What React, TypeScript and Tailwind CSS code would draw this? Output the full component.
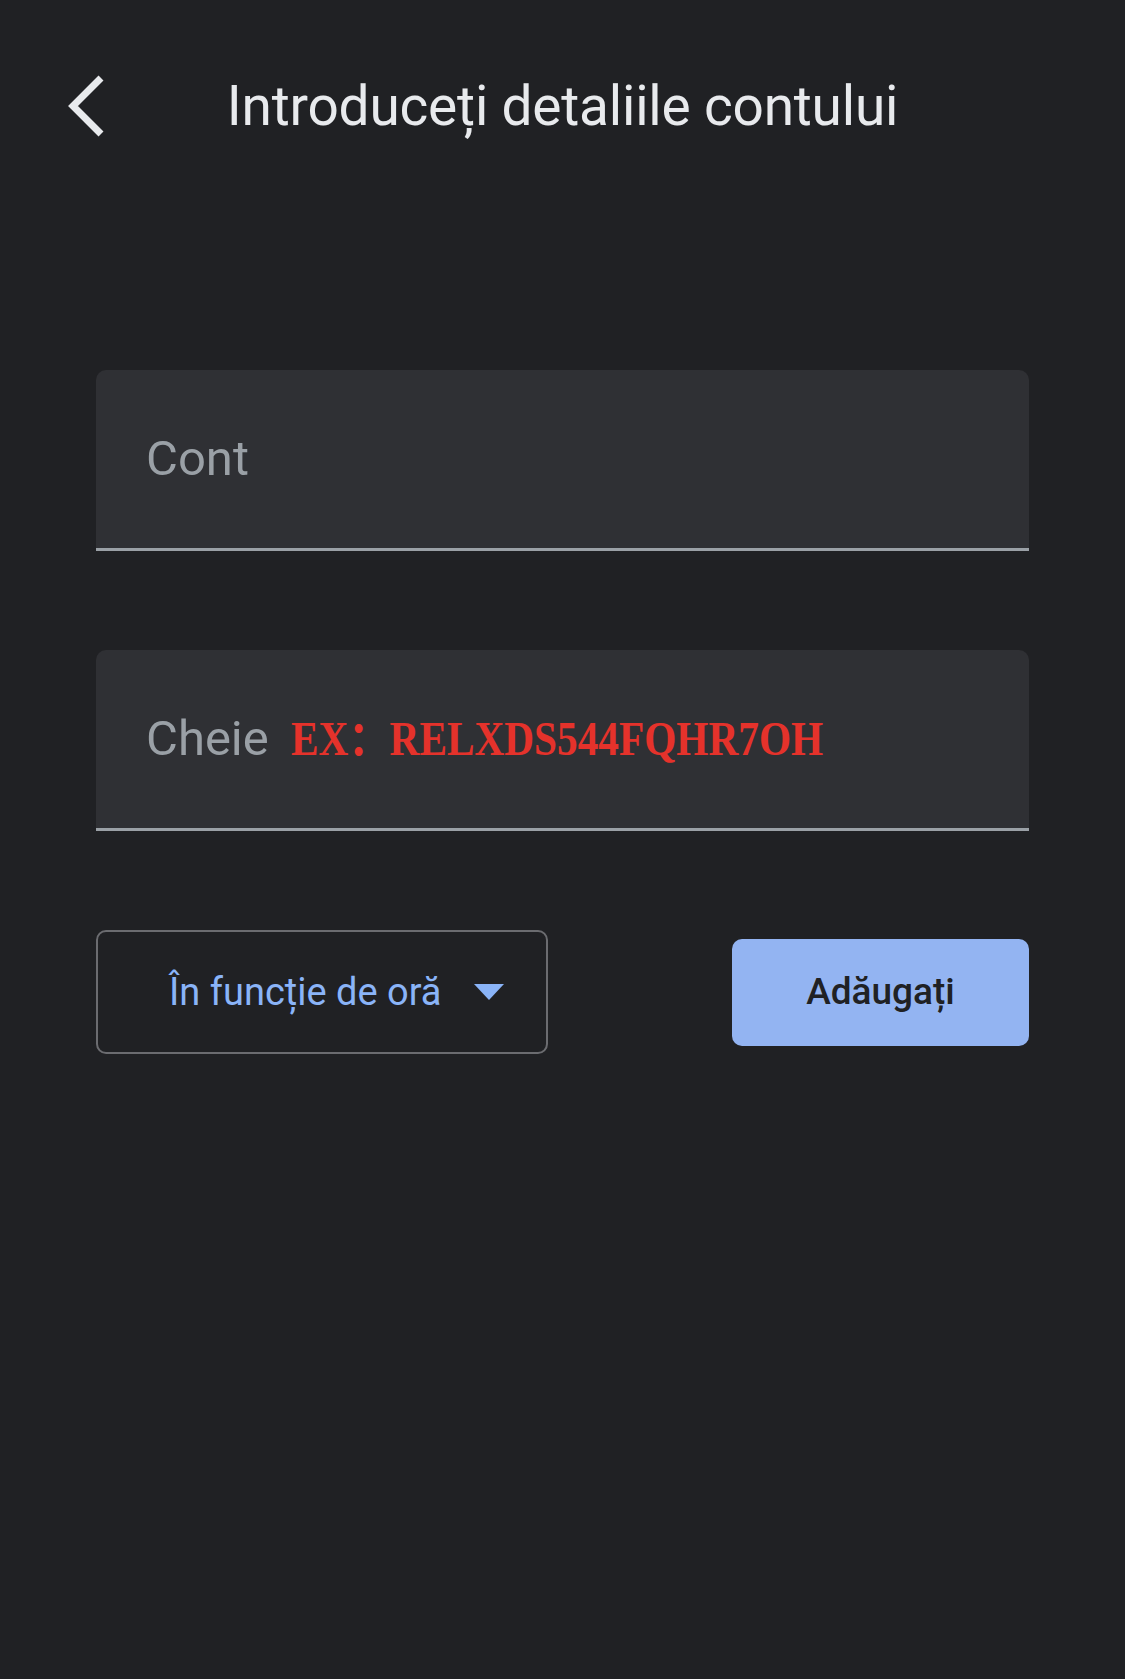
import React from "react";

function BackChevron() {
  return (
    <svg width="42" height="62" viewBox="0 0 42 62" className="shrink-0">
      <polyline
        points="37,3 9,31 37,59"
        fill="none"
        stroke="#e8eaed"
        strokeWidth="7"
        strokeLinecap="butt"
        strokeLinejoin="miter"
      />
    </svg>
  );
}

function TextField({ children }: { children: React.ReactNode }) {
  return (
    <div className="flex h-[181px] items-center rounded-t-[10px] border-b-[3px] border-[#9aa0a6] bg-[#2f3034] pl-[50px]">
      {children}
    </div>
  );
}

export default function App() {
  return (
    <div
      className="flex h-[1679px] w-[1125px] flex-col bg-[#202124]"
      style={{ fontFamily: "Roboto, 'Noto Sans', Arial, sans-serif" }}
    >
      {/* Header */}
      <header className="flex items-center px-[64px] pt-[75px]">
        <BackChevron />
        <h1 className="flex-1 text-center text-[55px] leading-[62px] font-normal tracking-[-0.2px] text-[#e8eaed]">
          Introduceți detaliile contului
        </h1>
        <div className="w-[42px]" />
      </header>

      {/* Form */}
      <div className="mt-[233px] flex flex-col px-[96px]">
        <TextField>
          <span className="text-[49px] text-[#9aa0a6]">Cont</span>
        </TextField>

        <div className="mt-[99px]">
          <TextField>
            <span className="text-[49px] text-[#9aa0a6]">Cheie</span>
            <span
              className="ml-[22px] origin-left scale-x-[0.86] text-[48px] font-bold whitespace-nowrap text-[#e5322b]"
              style={{ fontFamily: "'Liberation Serif', 'Noto Sans CJK SC', serif" }}
            >
              EX：RELXDS544FQHR7OH
            </span>
          </TextField>
        </div>

        <div className="mt-[99px] flex items-center justify-between">
          <button className="flex h-[124px] w-[452px] items-center rounded-[10px] border-2 border-[#6b6c70] pl-[71px]">
            <span className="text-[38px] font-normal text-[#8ab4f8]">În funcție de oră</span>
            <svg width="30" height="16" viewBox="0 0 30 16" className="ml-[32px]">
              <polygon points="0,0 30,0 15,16" fill="#8ab4f8" />
            </svg>
          </button>
          <button className="flex h-[107px] w-[297px] items-center justify-center rounded-[10px] bg-[#93b4f2]">
            <span className="text-[37px] font-medium text-[#202124]">Adăugați</span>
          </button>
        </div>
      </div>
    </div>
  );
}
